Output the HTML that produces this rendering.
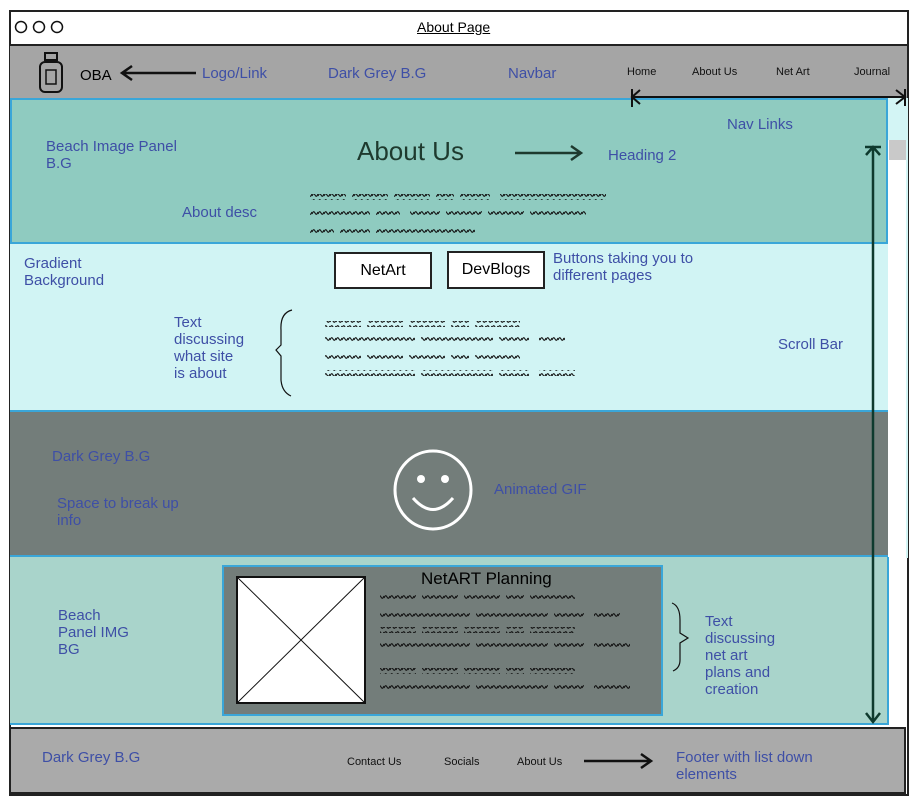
<!DOCTYPE html>
<html><head><meta charset="utf-8"><style>
*{margin:0;padding:0;box-sizing:border-box}
body{width:918px;height:803px;background:#fff;position:relative;overflow:hidden;font-family:"Liberation Sans",sans-serif}
.a{position:absolute;white-space:nowrap}
.b{color:#3e4fa6;font-size:15px;line-height:17px}
.k{color:#111;font-size:11px}
</style></head><body>
<div class="a" style="left:9px;top:10px;width:900px;height:786px;border:2px solid #222"></div>
<div class="a" style="left:10px;top:44px;width:898px;height:2px;background:#222"></div>
<svg class="a" style="left:14px;top:19px" width="60" height="16"><g fill="none" stroke="#111" stroke-width="1.5"><circle cx="7" cy="8" r="5.5"/><circle cx="25" cy="8" r="5.5"/><circle cx="43" cy="8" r="5.5"/></g></svg>
<div class="a" style="left:417px;top:19px;font-size:14px;text-decoration:underline">About Page</div>
<div class="a" style="left:10px;top:46px;width:897px;height:52px;background:#a5a5a5"></div>
<svg class="a" style="left:36px;top:52px" width="32" height="42"><rect x="9" y="1" width="12" height="7" fill="none" stroke="#111" stroke-width="2"/><rect x="4" y="10" width="22" height="30" rx="5" fill="none" stroke="#111" stroke-width="2"/><rect x="10" y="18" width="10" height="14" fill="none" stroke="#111" stroke-width="1.5"/></svg>
<div class="a" style="left:80px;top:67px;font-size:15px">OBA</div>
<div class="a b" style="left:202px;top:65px">Logo/Link</div>
<div class="a b" style="left:328px;top:65px">Dark Grey B.G</div>
<div class="a b" style="left:508px;top:65px">Navbar</div>
<div class="a k" style="left:627px;top:66px">Home</div>
<div class="a k" style="left:692px;top:66px">About Us</div>
<div class="a k" style="left:776px;top:66px">Net Art</div>
<div class="a k" style="left:854px;top:66px">Journal</div>
<div class="a" style="left:10px;top:98px;width:878px;height:146px;background:#8fcbc0;border:2px solid #3aa6d8"></div>
<div class="a" style="left:888px;top:98px;width:20px;height:460px;background:#d3f5f5"></div>
<div class="a" style="left:888px;top:140px;width:18px;height:418px;background:#fff"></div>
<div class="a" style="left:889px;top:140px;width:17px;height:20px;background:#c9c9c9"></div>
<div class="a b" style="left:46px;top:138px">Beach Image Panel<br>B.G</div>
<div class="a" style="left:357px;top:136px;font-size:26px;color:#1e3a2e">About Us</div>
<div class="a b" style="left:608px;top:147px">Heading 2</div>
<div class="a b" style="left:727px;top:116px">Nav Links</div>
<div class="a b" style="left:182px;top:204px">About desc</div>
<div class="a" style="left:10px;top:244px;width:878px;height:167px;background:#d1f4f4"></div>
<div class="a b" style="left:24px;top:255px">Gradient<br>Background</div>
<div class="a" style="left:334px;top:252px;width:98px;height:37px;border:2px solid #222;background:#fff;font-size:16px;text-align:center;line-height:33px">NetArt</div>
<div class="a" style="left:447px;top:251px;width:98px;height:38px;border:2px solid #222;background:#fff;font-size:16px;text-align:center;line-height:34px">DevBlogs</div>
<div class="a b" style="left:553px;top:250px">Buttons taking you to<br>different pages</div>
<div class="a b" style="left:174px;top:314px">Text<br>discussing<br>what site<br>is about</div>
<div class="a b" style="left:778px;top:336px">Scroll Bar</div>
<div class="a" style="left:10px;top:410px;width:878px;height:147px;background:#737d7a;border-top:2px solid #3aa6d8;border-bottom:2px solid #3aa6d8"></div>
<div class="a b" style="left:52px;top:448px">Dark Grey B.G</div>
<div class="a b" style="left:57px;top:495px">Space to break up<br>info</div>
<div class="a b" style="left:494px;top:481px">Animated GIF</div>
<svg class="a" style="left:393px;top:448px" width="80" height="84"><ellipse cx="40" cy="42" rx="38" ry="39" fill="none" stroke="#fff" stroke-width="3"/><circle cx="28" cy="31" r="4" fill="#fff"/><circle cx="52" cy="31" r="4" fill="#fff"/><path d="M20 50 Q40 73 60 50" fill="none" stroke="#fff" stroke-width="3"/></svg>
<div class="a" style="left:10px;top:557px;width:879px;height:168px;background:#a9d4cb;border-right:2px solid #3aa6d8;border-bottom:2px solid #3aa6d8"></div>
<div class="a b" style="left:58px;top:607px">Beach<br>Panel IMG<br>BG</div>
<div class="a" style="left:222px;top:565px;width:441px;height:151px;background:#737d7a;border:2px solid #3aa6d8"></div>
<svg class="a" style="left:236px;top:576px" width="131" height="129"><rect x="1" y="1" width="128" height="126" fill="#fff" stroke="#111" stroke-width="2"/><path d="M1 1L129 127M129 1L1 127" stroke="#111" stroke-width="1"/></svg>
<div class="a" style="left:421px;top:569px;font-size:17px">NetART Planning</div>
<div class="a b" style="left:705px;top:613px">Text<br>discussing<br>net art<br>plans and<br>creation</div>
<div class="a" style="left:9px;top:727px;width:897px;height:67px;background:#aaaaaa;border:2px solid #222"></div>
<div class="a b" style="left:42px;top:749px">Dark Grey B.G</div>
<div class="a k" style="left:347px;top:756px">Contact Us</div>
<div class="a k" style="left:444px;top:756px">Socials</div>
<div class="a k" style="left:517px;top:756px">About Us</div>
<div class="a b" style="left:676px;top:749px">Footer with list down<br>elements</div>
<svg class="a" style="left:0;top:0" width="918" height="803">
<defs><pattern id="w" width="6" height="6" patternUnits="userSpaceOnUse"><path d="M0 4 Q1.5 0 3 3 Q4.5 6 6 2" fill="none" stroke="#111" stroke-width="1.1"/></pattern></defs>
<g fill="url(#w)">
<rect x="310" y="194" width="36" height="6"/><rect x="352" y="194" width="36" height="6"/><rect x="394" y="194" width="36" height="6"/><rect x="436" y="194" width="18" height="6"/><rect x="460" y="194" width="30" height="6"/><rect x="500" y="194" width="106" height="6"/>
<rect x="310" y="210" width="60" height="6"/><rect x="376" y="210" width="24" height="6"/><rect x="410" y="210" width="30" height="6"/><rect x="446" y="210" width="36" height="6"/><rect x="488" y="210" width="36" height="6"/><rect x="530" y="210" width="56" height="6"/>
<rect x="310" y="227" width="24" height="6"/><rect x="340" y="227" width="30" height="6"/><rect x="376" y="227" width="99" height="6"/>
<rect x="325" y="321" width="36" height="6"/><rect x="367" y="321" width="36" height="6"/><rect x="409" y="321" width="36" height="6"/><rect x="451" y="321" width="18" height="6"/><rect x="475" y="321" width="45" height="6"/>
<rect x="325" y="337" width="90" height="6"/><rect x="421" y="337" width="72" height="6"/><rect x="499" y="337" width="30" height="6"/><rect x="539" y="337" width="26" height="6"/>
<rect x="325" y="354" width="36" height="6"/><rect x="367" y="354" width="36" height="6"/><rect x="409" y="354" width="36" height="6"/><rect x="451" y="354" width="18" height="6"/><rect x="475" y="354" width="45" height="6"/>
<rect x="325" y="370" width="90" height="6"/><rect x="421" y="370" width="72" height="6"/><rect x="499" y="370" width="30" height="6"/><rect x="539" y="370" width="36" height="6"/>
<rect x="380" y="595" width="36" height="6"/><rect x="422" y="595" width="36" height="6"/><rect x="464" y="595" width="36" height="6"/><rect x="506" y="595" width="18" height="6"/><rect x="530" y="595" width="45" height="6"/>
<rect x="380" y="611" width="90" height="6"/><rect x="476" y="611" width="72" height="6"/><rect x="554" y="611" width="30" height="6"/><rect x="594" y="611" width="26" height="6"/>
<rect x="380" y="627" width="36" height="6"/><rect x="422" y="627" width="36" height="6"/><rect x="464" y="627" width="36" height="6"/><rect x="506" y="627" width="18" height="6"/><rect x="530" y="627" width="45" height="6"/>
<rect x="380" y="643" width="90" height="6"/><rect x="476" y="643" width="72" height="6"/><rect x="554" y="643" width="30" height="6"/><rect x="594" y="643" width="36" height="6"/>
<rect x="380" y="668" width="36" height="6"/><rect x="422" y="668" width="36" height="6"/><rect x="464" y="668" width="36" height="6"/><rect x="506" y="668" width="18" height="6"/><rect x="530" y="668" width="45" height="6"/>
<rect x="380" y="685" width="90" height="6"/><rect x="476" y="685" width="72" height="6"/><rect x="554" y="685" width="30" height="6"/><rect x="594" y="685" width="36" height="6"/>
</g>
<g stroke="#111" stroke-width="2.5" fill="none">
<path d="M123 73H196M132 66L122 73L132 80"/>
<path d="M515 153H580M571 146L581 153L571 160" stroke="#1e3a2e"/>
<path d="M584 761H650M641 754L651 761L641 768"/>
<path d="M632 97H905M632 89V107M640 90L632 97L640 104M896 90L905 97L896 104M905 89V106" stroke-width="2"/>
<path d="M873 147V722M866 155L873 147L880 155M866 713L873 722L880 713M865 147H881" stroke="#0e3a2e" stroke-width="2.5"/>
<path d="M292 310Q280 313 281 330V345L276 350L281 356V380Q282 392 291 396" stroke-width="1.2"/>
<path d="M672 603Q680 606 680 620V633L688 638L680 643V660Q680 668 673 671" stroke-width="1.2"/>
</g>
</svg>
</body></html>
